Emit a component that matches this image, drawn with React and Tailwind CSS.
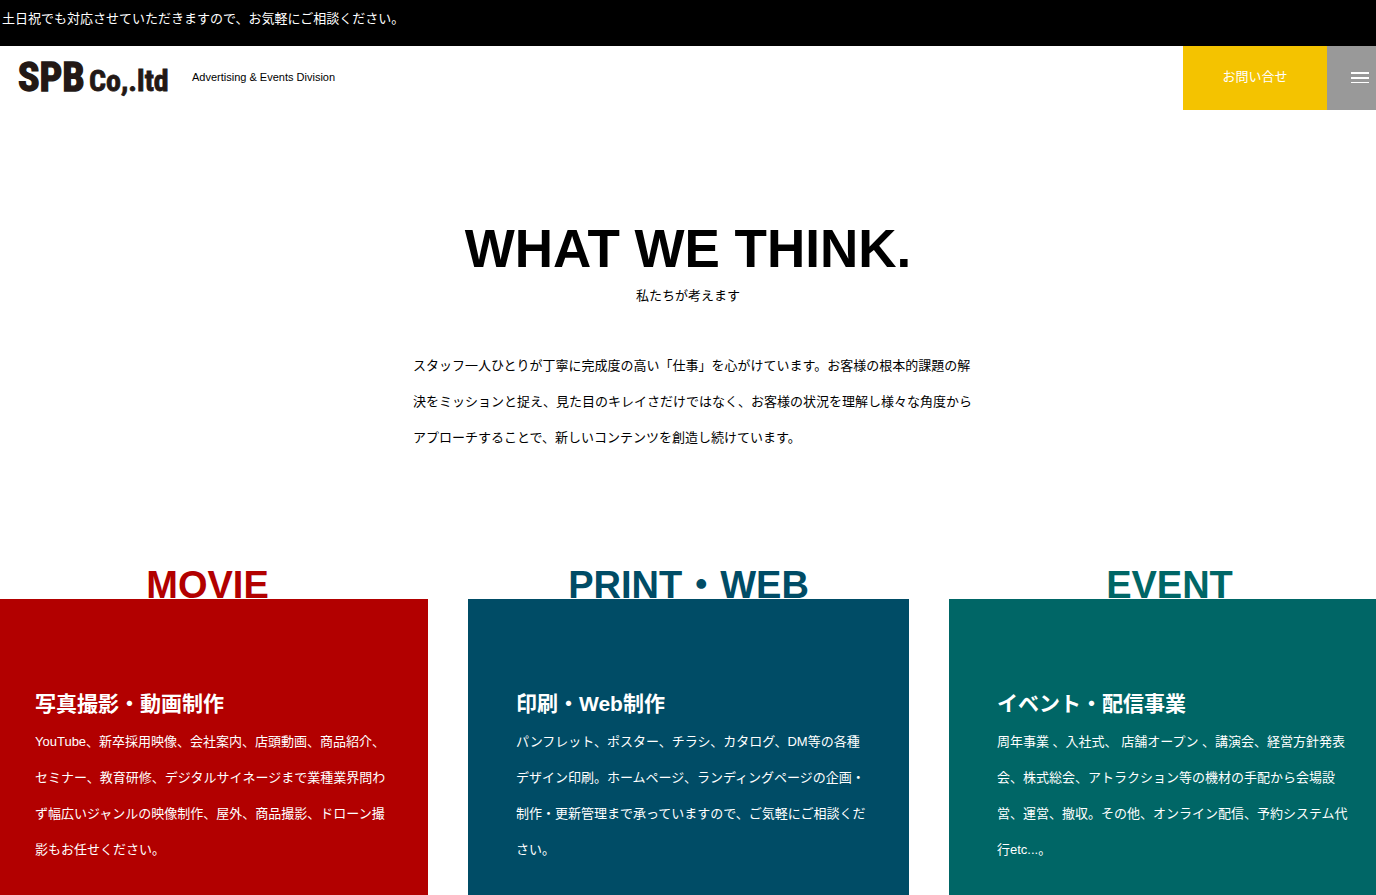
import { clsx } from "clsx";

const services = [
  {
    label: "MOVIE",
    labelColor: "text-[#b20000]",
    background: "bg-[#b20000]",
    title: "写真撮影・動画制作",
    text: `YouTube、新卒採用映像、会社案内、店頭動画、商品紹介、
セミナー、教育研修、デジタルサイネージまで業種業界問わ
ず幅広いジャンルの映像制作、屋外、商品撮影、ドローン撮
影もお任せください。`,
  },
  {
    label: "PRINT・WEB",
    labelColor: "text-[#004c66]",
    background: "bg-[#004c66]",
    title: "印刷・Web制作",
    text: `パンフレット、ポスター、チラシ、カタログ、DM等の各種
デザイン印刷。ホームページ、ランディングページの企画・
制作・更新管理まで承っていますので、ご気軽にご相談くだ
さい。`,
  },
  {
    label: "EVENT",
    labelColor: "text-[#006666]",
    background: "bg-[#006666]",
    title: "イベント・配信事業",
    text: `周年事業 、入社式、 店舗オープン 、講演会、経営方針発表
会、株式総会、アトラクション等の機材の手配から会場設
営、運営、撤収。その他、オンライン配信、予約システム代
行etc...。`,
  },
];

export default function App() {
  return (
    <div className="overflow-hidden bg-white font-['Liberation_Sans','Noto_Sans_CJK_JP',sans-serif] text-[13px] leading-9 text-black">
      <p className="h-[46px] bg-black px-0.5 pt-px text-white">
        土日祝でも対応させていただきますので、お気軽にご相談ください。
      </p>
      <Header />
      <main>
        <section className="flex flex-col items-center px-4 pt-28">
          <h1 className="text-center text-[53px] leading-[53px] font-bold">WHAT WE THINK.</h1>
          <p className="mt-[3px]">私たちが考えます</p>
          <p className="mt-[34px] w-full max-w-[574px] pl-3 whitespace-pre-line">
            {`スタッフ一人ひとりが丁寧に完成度の高い「仕事」を心がけています。お客様の根本的課題の解
決をミッションと捉え、見た目のキレイさだけではなく、お客様の状況を理解し様々な角度から
アプローチすることで、新しいコンテンツを創造し続けています。`}
          </p>
        </section>

        {/* Outer cards bleed past both edges of the window */}
        <section className="-mr-3.5 -ml-[13px] mt-[115px] grid grid-cols-3 gap-10">
          {services.map((service) => (
            <ServiceCard key={service.label} {...service} />
          ))}
        </section>
      </main>
    </div>
  );
}

function Header() {
  return (
    <header className="flex h-16 items-stretch">
      <a href="#top" aria-label="SPB Co,.ltd" className="ml-[18px] flex items-center">
        <Logo />
      </a>
      <p className="ml-[22px] self-center pb-0.5 text-[11px] leading-4">Advertising &amp; Events Division</p>
      <a
        href="#contact"
        className="ml-auto flex w-36 items-center justify-center bg-[#f4c300] pb-0.5 text-white"
      >
        お問い合せ
      </a>
      <button type="button" aria-label="メニュー" className="flex w-[49px] flex-col justify-center gap-[3px] bg-[#999999] pb-px pl-6">
        <span className="h-0.5 w-[18px] bg-white" />
        <span className="h-0.5 w-[18px] bg-white" />
        <span className="h-px w-[18px] bg-white" />
      </button>
    </header>
  );
}

function Logo() {
  return (
    <svg
      width="152"
      height="48"
      viewBox="0 0 152 48"
      fill="#231815"
      stroke="#231815"
      className="overflow-visible font-['Liberation_Sans_Narrow','Roboto_Condensed','DejaVu_Sans_Condensed',sans-serif] font-bold"
    >
      <text x="0" y="37" fontSize="40" strokeWidth="1.4">SPB</text>
      <text x="71" y="37" fontSize="30" strokeWidth="0.8">Co,.ltd</text>
    </svg>
  );
}

function ServiceCard({ label, labelColor, background, title, text }) {
  return (
    <article className="flex flex-col">
      <h2 className={clsx("text-center text-[38px] leading-7 font-bold whitespace-nowrap", labelColor)}>
        {label}
      </h2>
      <div className={clsx("flex-1 pt-[87px] pr-8 pb-[27px] pl-12 text-white", background)}>
        <h3 className="text-[21px] leading-9 font-bold">{title}</h3>
        <p className="mt-0.5 whitespace-pre-line">{text}</p>
      </div>
    </article>
  );
}
